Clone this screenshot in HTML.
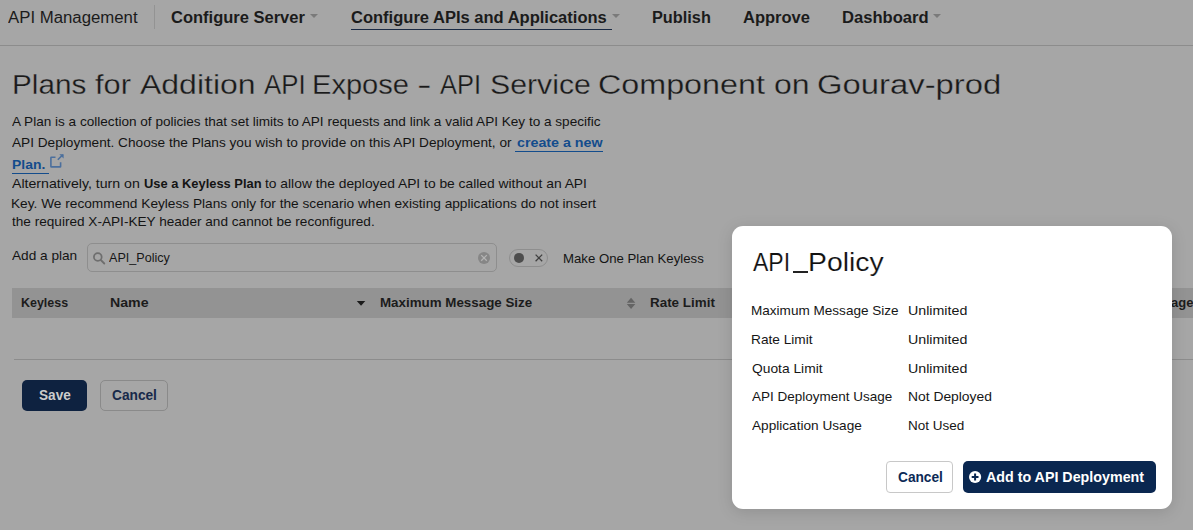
<!DOCTYPE html>
<html><head><meta charset="utf-8">
<style>
*{margin:0;padding:0;box-sizing:border-box}
html,body{width:1193px;height:530px;overflow:hidden;background:#a6a6a6;font-family:"Liberation Sans",sans-serif;color:#1b1b1b}
.t{position:absolute;white-space:nowrap;line-height:1;transform-origin:0 0;z-index:2}
.lk{color:#134c8c;font-weight:bold}
.abs{position:absolute}
.caret{position:absolute;width:0;height:0;border-left:4px solid transparent;border-right:4px solid transparent;border-top:4px solid #7a7a7a}
#mt,#mt2,#m1,#m2,#m3,#m4,#m5,#v1,#v2,#v3,#v4,#v5,#mc,#ma{z-index:12}
.modal{position:absolute;left:732px;top:226px;width:440px;height:283px;background:#fff;border-radius:11px;box-shadow:0 3px 16px rgba(0,0,0,.13);z-index:10}

</style></head><body>
<div class="abs" style="left:154px;top:5px;width:1px;height:24px;background:#939393"></div>
<div class="caret" style="left:310px;top:14px"></div>
<div class="caret" style="left:612px;top:14px"></div>
<div class="abs" style="left:351px;top:29px;width:261px;height:1px;background:#1a2a44"></div>
<div class="caret" style="left:933px;top:14px"></div>
<div class="abs" style="left:0;top:45px;width:1193px;height:1px;background:#8c8c8c"></div>
<div class="abs" style="left:12px;top:173px;width:37px;height:1px;background:#134c8c"></div>
<div class="abs" style="left:515px;top:151px;width:88px;height:1px;background:#134c8c"></div>
<div class="abs" style="left:87px;top:243px;width:410px;height:29px;border:1px solid #8e8e8e;border-radius:5px"></div>
<div class="abs" style="left:509px;top:249px;width:39px;height:18px;border:1px solid #8e8e8e;border-radius:9px"></div>
<div class="abs" style="left:12px;top:288px;width:1181px;height:30px;background:#939393"></div>
<div class="abs" style="left:14px;top:359px;width:1179px;height:1px;background:#8c8c8c"></div>
<div class="abs" style="left:22px;top:380px;width:65px;height:31px;background:#0e2240;border-radius:5px"></div>
<div class="abs" style="left:100px;top:380px;width:68px;height:31px;border:1px solid #8a8a8a;border-radius:5px"></div>
<div class="modal"></div>
<div class="abs" style="left:886px;top:461px;width:67px;height:32px;border:1px solid #c8c8c8;border-radius:4px;z-index:11"></div>
<div class="abs" style="left:963px;top:461px;width:193px;height:32px;background:#0a2750;border-radius:5px;z-index:11"></div>
<svg class="abs" style="left:0;top:0;z-index:3" width="1193" height="530" viewBox="0 0 1193 530">
 <!-- search icon -->
 <circle cx="97.8" cy="257.0" r="3.9" fill="none" stroke="#6e6e6e" stroke-width="1.7"/>
 <line x1="100.8" y1="260.0" x2="104.3" y2="263.5" stroke="#6e6e6e" stroke-width="1.8" stroke-linecap="round"/>
 <!-- clear icon -->
 <circle cx="484" cy="257.9" r="6" fill="#868686"/>
 <path d="M481.2 255.1 L486.8 260.7 M486.8 255.1 L481.2 260.7" stroke="#b3b3b3" stroke-width="1.3"/>
 <!-- toggle -->
 <circle cx="519" cy="257.9" r="5" fill="#4d4d4d"/>
 <path d="M535.6 254.6 L542.2 261.2 M542.2 254.6 L535.6 261.2" stroke="#404040" stroke-width="1.3"/>
 <!-- name caret -->
 <path d="M356.8 301 L365.3 301 L361.05 305.8 Z" fill="#1a1a1a"/>
 <!-- sort icon -->
 <path d="M626.8 302.8 L635.3 302.8 L631.05 297.8 Z M626.8 303.9 L635.3 303.9 L631.05 308.9 Z" fill="#646464"/>
 <!-- external link -->
 <path d="M55.5 157.2 L51.4 157.2 Q50.9 157.2 50.9 157.7 L50.9 166.4 Q50.9 166.9 51.4 166.9 L60.1 166.9 Q60.6 166.9 60.6 166.4 L60.6 162.3" fill="none" stroke="#4b6f9d" stroke-width="1.6"/>
 <path d="M57.8 159.8 L62.8 154.8" stroke="#4b6f9d" stroke-width="1.6"/>
 <path d="M59.3 154.2 L63.6 154.2 L63.6 158.5 Z" fill="#4b6f9d"/>
</svg>
<svg class="abs" style="left:0;top:0;z-index:13" width="1193" height="530" viewBox="0 0 1193 530">
 <circle cx="975.1" cy="477" r="6.1" fill="#fff"/>
 <path d="M975.1 473.6 L975.1 480.4 M971.7 477 L978.5 477" stroke="#0a2750" stroke-width="2"/>
</svg>
<div class="abs" style="left:793px;top:271.2px;width:14.5px;height:1.6px;background:#222;z-index:12"></div>

<div class="t" id="nav1" style="left:8.00px;top:10.00px;font-size:16px;color:#1b1b1b;transform:scaleX(1.0484)">API Management</div>
<div class="t" id="nav2" style="left:170.82px;top:10.00px;font-size:16px;font-weight:bold;color:#1b1b1b;transform:scaleX(1.0310)">Configure Server</div>
<div class="t" id="nav3" style="left:350.97px;top:10.00px;font-size:16px;font-weight:bold;color:#1b1b1b;transform:scaleX(1.0325)">Configure APIs and Applications</div>
<div class="t" id="nav4" style="left:652.41px;top:10.00px;font-size:16px;font-weight:bold;color:#1b1b1b;transform:scaleX(1.0184)">Publish</div>
<div class="t" id="nav5" style="left:743.29px;top:10.00px;font-size:16px;font-weight:bold;color:#1b1b1b;transform:scaleX(1.0316)">Approve</div>
<div class="t" id="nav6" style="left:841.50px;top:10.00px;font-size:16px;font-weight:bold;color:#1b1b1b;transform:scaleX(1.0367)">Dashboard</div>
<div class="t" id="hw0" style="left:11.93px;top:72.00px;font-size:27px;color:#1a1a1a;-webkit-text-stroke:0.3px #a6a6a6;transform:scaleX(1.0992)">Plans</div>
<div class="t" id="hw1" style="left:95.07px;top:72.00px;font-size:27px;color:#1a1a1a;-webkit-text-stroke:0.3px #a6a6a6;transform:scaleX(1.1400)">for</div>
<div class="t" id="hw2" style="left:140.46px;top:72.00px;font-size:27px;color:#1a1a1a;-webkit-text-stroke:0.3px #a6a6a6;transform:scaleX(1.1847)">Addition</div>
<div class="t" id="hw3" style="left:264.16px;top:72.00px;font-size:27px;color:#1a1a1a;-webkit-text-stroke:0.3px #a6a6a6;transform:scaleX(0.9555)">API</div>
<div class="t" id="hw4" style="left:312.17px;top:72.00px;font-size:27px;color:#1a1a1a;-webkit-text-stroke:0.3px #a6a6a6;transform:scaleX(1.0763)">Expose</div>
<div class="t" id="hw5" style="left:416.73px;top:72.00px;font-size:27px;color:#1a1a1a;-webkit-text-stroke:0.3px #a6a6a6;transform:scaleX(1.6212)">-</div>
<div class="t" id="hw6" style="left:440.40px;top:72.00px;font-size:27px;color:#1a1a1a;-webkit-text-stroke:0.3px #a6a6a6;transform:scaleX(0.9437)">API</div>
<div class="t" id="hw7" style="left:489.73px;top:72.00px;font-size:27px;color:#1a1a1a;-webkit-text-stroke:0.3px #a6a6a6;transform:scaleX(1.1213)">Service</div>
<div class="t" id="hw8" style="left:597.81px;top:72.00px;font-size:27px;color:#1a1a1a;-webkit-text-stroke:0.3px #a6a6a6;transform:scaleX(1.1954)">Component</div>
<div class="t" id="hw9" style="left:773.80px;top:72.00px;font-size:27px;color:#1a1a1a;-webkit-text-stroke:0.3px #a6a6a6;transform:scaleX(1.1859)">on</div>
<div class="t" id="hw10" style="left:817.43px;top:72.00px;font-size:27px;color:#1a1a1a;-webkit-text-stroke:0.3px #a6a6a6;transform:scaleX(1.2160)">Gourav-prod</div>
<div class="t" id="p1" style="left:12.21px;top:115.00px;font-size:13px;color:#141414;transform:scaleX(1.0443)">A Plan is a collection of policies that set limits to API requests and link a valid API Key to a specific</div>
<div class="t" id="p2" style="left:12.21px;top:136.00px;font-size:13px;color:#141414;transform:scaleX(1.0490)">API Deployment. Choose the Plans you wish to provide on this API Deployment, or</div>
<div class="t" id="p2b" style="left:516.73px;top:136.00px;font-size:13px;color:#141414;transform:scaleX(1.0962)"><span class=lk>create a new</span></div>
<div class="t" id="p3" style="left:12.02px;top:158.00px;font-size:13px;color:#141414;transform:scaleX(1.0708)"><span class=lk>Plan.</span></div>
<div class="t" id="p4" style="left:12.22px;top:177.00px;font-size:13px;color:#141414;transform:scaleX(1.0875)">Alternatively, turn on</div>
<div class="t" id="p4b" style="left:144.19px;top:177.00px;font-size:13px;color:#141414;transform:scaleX(0.9916)"><b>Use a Keyless Plan</b></div>
<div class="t" id="p4c" style="left:265.36px;top:177.00px;font-size:13px;color:#141414;transform:scaleX(1.0631)">to allow the deployed API to be called without an API</div>
<div class="t" id="p5" style="left:11.16px;top:197.00px;font-size:13px;color:#141414;transform:scaleX(1.0523)">Key. We recommend Keyless Plans only for the scenario when existing applications do not insert</div>
<div class="t" id="p6" style="left:12.21px;top:215.00px;font-size:13px;color:#141414;transform:scaleX(1.0463)">the required X-API-KEY header and cannot be reconfigured.</div>
<div class="t" id="add" style="left:12.21px;top:249.00px;font-size:13px;color:#141414;transform:scaleX(1.0490)">Add a plan</div>
<div class="t" id="srch" style="left:109.27px;top:251.00px;font-size:13px;color:#161616;transform:scaleX(0.9687)">API_Policy</div>
<div class="t" id="mk" style="left:562.51px;top:252.00px;font-size:13px;color:#141414;transform:scaleX(1.0145)">Make One Plan Keyless</div>
<div class="t" id="th1" style="left:20.62px;top:296.00px;font-size:13px;font-weight:bold;color:#1c1c1c;transform:scaleX(0.9583)">Keyless</div>
<div class="t" id="th2" style="left:110.20px;top:296.00px;font-size:13px;font-weight:bold;color:#1c1c1c;transform:scaleX(1.0878)">Name</div>
<div class="t" id="th3" style="left:380.06px;top:296.00px;font-size:13px;font-weight:bold;color:#1c1c1c;transform:scaleX(1.0273)">Maximum Message Size</div>
<div class="t" id="th4" style="left:649.82px;top:296.00px;font-size:13px;font-weight:bold;color:#1c1c1c;transform:scaleX(1.0322)">Rate Limit</div>
<div class="t" id="th5" style="left:1154.50px;top:296.00px;font-size:13px;font-weight:bold;color:#1c1c1c;transform:scaleX(1.0000)">Usage</div>
<div class="t" id="save" style="left:38.88px;top:388.00px;font-size:14px;font-weight:bold;color:#cccccc;transform:scaleX(0.9712)">Save</div>
<div class="t" id="cnl" style="left:112.00px;top:388.00px;font-size:14px;font-weight:bold;color:#18294a;transform:scaleX(0.9786)">Cancel</div>
<div class="t" id="mt" style="left:753.40px;top:250.00px;font-size:25px;color:#111;-webkit-text-stroke:0.15px #fff;transform:scaleX(0.9205)">API</div>
<div class="t" id="mt2" style="left:808.31px;top:250.00px;font-size:25px;color:#111;-webkit-text-stroke:0.15px #fff;transform:scaleX(1.1341)">Policy</div>
<div class="t" id="m1" style="left:751.25px;top:304.00px;font-size:13px;color:#161616;transform:scaleX(1.0426)">Maximum Message Size</div>
<div class="t" id="v1" style="left:908.05px;top:304.00px;font-size:13px;color:#161616;transform:scaleX(1.0946)">Unlimited</div>
<div class="t" id="m2" style="left:751.31px;top:333.00px;font-size:13px;color:#161616;transform:scaleX(1.0522)">Rate Limit</div>
<div class="t" id="v2" style="left:908.05px;top:333.00px;font-size:13px;color:#161616;transform:scaleX(1.0946)">Unlimited</div>
<div class="t" id="m3" style="left:752.25px;top:362.00px;font-size:13px;color:#161616;transform:scaleX(1.0611)">Quota Limit</div>
<div class="t" id="v3" style="left:908.05px;top:362.00px;font-size:13px;color:#161616;transform:scaleX(1.0946)">Unlimited</div>
<div class="t" id="m4" style="left:752.31px;top:390.00px;font-size:13px;color:#161616;transform:scaleX(1.0372)">API Deployment Usage</div>
<div class="t" id="v4" style="left:908.06px;top:390.00px;font-size:13px;color:#161616;transform:scaleX(1.0651)">Not Deployed</div>
<div class="t" id="m5" style="left:752.31px;top:419.00px;font-size:13px;color:#161616;transform:scaleX(1.0478)">Application Usage</div>
<div class="t" id="v5" style="left:908.07px;top:419.00px;font-size:13px;color:#161616;transform:scaleX(1.0384)">Not Used</div>
<div class="t" id="mc" style="left:897.72px;top:470.00px;font-size:14px;font-weight:bold;color:#0c2a56;transform:scaleX(0.9782)">Cancel</div>
<div class="t" id="ma" style="left:986.49px;top:470.00px;font-size:14px;font-weight:bold;color:#fff;transform:scaleX(1.0194)">Add to API Deployment</div>

</body></html>
